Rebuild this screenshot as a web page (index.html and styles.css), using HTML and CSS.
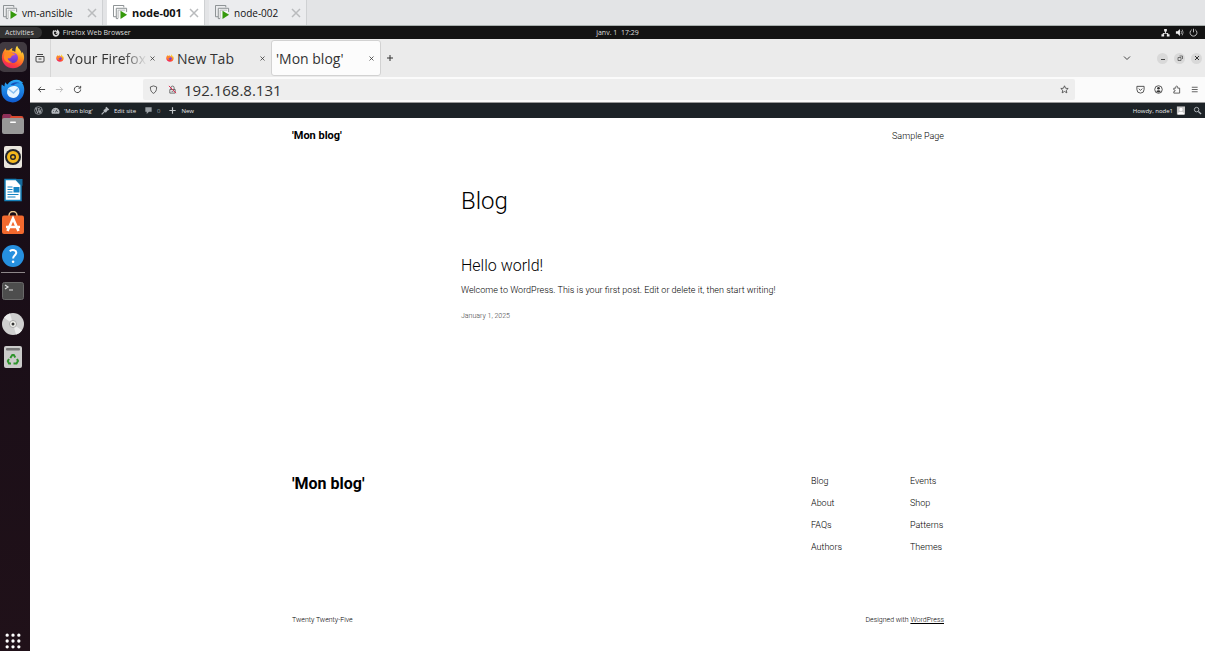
FILE: index.html
```html
<!DOCTYPE html>
<html lang="en">
<head>
<meta charset="utf-8">
<title>'Mon blog'</title>
<link rel="stylesheet" href="styles.css">
</head>
<body>
<svg class="defs" aria-hidden="true">
  <defs>
    <linearGradient id="flame" x1="0.8" y1="0" x2="0.3" y2="1">
      <stop offset="0" stop-color="#fff04a"/><stop offset="0.4" stop-color="#ff9a1f"/><stop offset="0.75" stop-color="#ff4438"/><stop offset="1" stop-color="#e8206a"/>
    </linearGradient>
    <linearGradient id="globe" x1="0" y1="0" x2="0" y2="1">
      <stop offset="0" stop-color="#b04be8"/><stop offset="1" stop-color="#5a38c8"/>
    </linearGradient>
    <linearGradient id="blue" x1="0" y1="0" x2="0" y2="1">
      <stop offset="0" stop-color="#2aa8f4"/><stop offset="1" stop-color="#0f5bd0"/>
    </linearGradient>
    <symbol id="firefox" viewBox="0 0 24 24">
      <path fill="url(#flame)" d="M3.200 5.200c.4-.8 1-1.500 1.400-1.900.1.900.5 1.700 1.100 2.200.8-.2 1.700-.2 2.400.1C9.100 4.300 10.300 3.400 11.600 3.100c-.5.8-.7 1.600-.6 2.300 1.500.2 2.400.8 3.200 1.600C14.700 4.500 14.400 2.400 16.200.8c.5 2.300 2.300 3.300 3.500 5.100.6.900.9 1.700 1 2.500.5-.5.700-1.100.7-1.700 1.200 1.800 1.900 4.200 1.700 6.600C22.700 19.100 17.900 23.300 12 23.300 5.900 23.300.9 18.500.9 12.500c0-2.800.9-5.400 2.300-7.300z"/>
      <circle cx="11.700" cy="12.800" r="5.300" fill="url(#globe)"/>
      <path fill="#ff8a22" d="M3.500 8.500c2.500-2.300 6.200-2 8.300-.3 1.300.2 2.200.7 2.300 1.400-.9 1-2.500.8-3.300 1.500-.7.700-.4 2-2 2.200-1 .2-1.700-.4-2.200.2.500 2 2.500 3.600 5 3.500-3.600 2-8.200-.3-8.800-4.500z"/>
    </symbol>
    <symbol id="cross" viewBox="0 0 10 10"><path d="M1 1l8 8M9 1L1 9" fill="none" stroke="currentColor" stroke-width="1.500"/></symbol>
    <symbol id="vm" viewBox="0 0 16 16">
      <path d="M3.500 12.500h-3V.500h11v2" fill="none" stroke="#858b8d"/><path d="M5.500 14.500h-2v-11h11v4" fill="#f6f7f7" stroke="#858b8d"/><path d="M5.500 14V5.500H13" fill="none" stroke="#b4b8b9"/>
      <path d="M8 6l7 4.500L8 15z" fill="#35990b"/>
    </symbol>
  </defs>
</svg>

<nav class="vm-tabs" aria-label="Virtual machines">
  <div class="vm-tab"><button class="vm-name"><svg><use href="#vm"/></svg>vm-ansible</button><button class="vm-close" aria-label="Close vm-ansible"><svg><use href="#cross"/></svg></button></div>
  <div class="vm-tab vm-tab-active"><button class="vm-name"><svg><use href="#vm"/></svg>node-001</button><button class="vm-close" aria-label="Close node-001"><svg><use href="#cross"/></svg></button></div>
  <div class="vm-tab"><button class="vm-name"><svg><use href="#vm"/></svg>node-002</button><button class="vm-close" aria-label="Close node-002"><svg><use href="#cross"/></svg></button></div>
</nav>

<header class="topbar">
  <div class="topbar-left">
    <button class="activities">Activities</button>
    <button class="app-menu"><svg viewBox="0 0 12 12"><path fill="#d8d8d8" d="M1.200 3l1-1.500.8 1 1.500-.2L5.800 1v1.300l1.400.8L8 .500l2 2 1.200 2c.3 4-2 7-5.200 7S.500 9 .800 5.500z"/><path fill="#151515" d="M3 4l3 .2.800 1L5 6.200l1.700 1.300 1.800-1-.8 2L5 9 3.200 7z"/></svg>Firefox Web Browser</button>
  </div>
  <button class="clock">janv. 1&nbsp; 17:29</button>
  <button class="tray" aria-label="System menu">
    <svg viewBox="0 0 10 10"><path fill="#eee" d="M3.500 1h3v3h-1v1.500H8V7h1.500v2.500h-3V7H7v-.600H3V7h.5v2.500h-3V7H2V5.500h2.500V4h-1z"/></svg>
    <svg viewBox="0 0 10 10"><path fill="#eee" d="M1 3.500h2L5.500 1v8L3 6.500H1z"/><path d="M6.700 3.200q1.300 1.800 0 3.600M8 1.800q2 3.200 0 6.400" fill="none" stroke="#aaa"/></svg>
    <svg viewBox="0 0 10 10"><path d="M3 2a3.800 3.800 0 1 0 4 0M5 .8v4" fill="none" stroke="#ccc"/></svg>
  </button>
</header>

<div class="desktop">
  <nav class="dock" aria-label="Dock">
    <button class="dock-item dock-active" aria-label="Firefox"><svg viewBox="0 0 24 24"><use href="#firefox"/></svg></button>
    <button class="dock-item" aria-label="Thunderbird"><svg viewBox="0 0 24 24"><path fill="url(#blue)" d="M.8 5.500l2.700 2.100C3.400 5.200 4 4 4.800 3.300c.3 1.200.8 1.900 1.700 2.300C8.200 2.500 12 .6 15.800.7c2.300 0 3.700 1 4.600 1.800l1.700 1-1 .4c2.600 3.200 2.800 8.600 1 12.600-1.900 4.200-5.900 6.900-10.400 6.900C5.200 23.400.500 18.400.500 12.300c0-2.700-.3-4.800.3-6.800z"/><path fill="#1450b8" d="M9.500 6c2-3 6.500-3.800 10-1.500-3-.5-5.500.3-6.500 1.500z"/><path fill="#e8f5ff" d="M7 9.500c2.500-2.500 7-3.500 10-1 2.500 2.500 1.500 7.500-1.500 9.500-3.500 2-8.500.5-9.300-3.500-.3-1.800 0-3.500.8-5z"/><path d="M7.500 10l5 4 4.500-4.500" fill="none" stroke="#8abff0" stroke-width="1.500"/></svg></button>
    <button class="dock-item" aria-label="Files"><svg viewBox="0 0 24 24"><path fill="#d94a30" d="M1.500 4a2 2 0 0 1 2-2H9l2 2h9.500a2 2 0 0 1 2 2v6h-21z"/><path fill="#8d2f59" d="M1.500 4a2 2 0 0 1 2-2H9l1 2-2 3H1.500z"/><rect x="1" y="6" width="22" height="16" rx="2" fill="#989898"/><rect x="9" y="9.500" width="6" height="1.500" rx=".7" fill="#fff"/></svg></button>
    <button class="dock-item" aria-label="Rhythmbox"><svg viewBox="0 0 24 24"><rect x="3" y="1" width="18" height="22" rx="2" fill="#e9e5dd"/><circle cx="12" cy="12" r="8" fill="#23242b"/><circle cx="12" cy="12" r="4.500" fill="none" stroke="#f5b91d" stroke-width="3"/><circle cx="12" cy="12" r="1.600" fill="#f5b91d"/></svg></button>
    <button class="dock-item" aria-label="LibreOffice Writer"><svg viewBox="0 0 24 24"><path fill="#fff" stroke="#1680b8" stroke-width="1.500" d="M4 1.500h11L20 7v15.500H4z"/><path fill="#176a9c" d="M14.500 1h7v7z"/><path d="M6.500 9h5M6.500 11.500h5M6.500 14h5M6.500 16.500h11M6.500 19h8" stroke="#1484c4" stroke-width="1.200"/><rect x="12.500" y="9" width="6" height="5.500" fill="#1484c4"/></svg></button>
    <button class="dock-item" aria-label="Ubuntu Software"><svg viewBox="0 0 24 24"><path d="M8 6V4.500a4 4 0 0 1 8 0V6" fill="none" stroke="#e9c58e" stroke-width="1.500"/><rect x="1" y="4.500" width="22" height="18.500" rx="2" fill="#f3692e"/><path d="M6.500 20L12 7.500 17.500 20M5 16h14" fill="none" stroke="#fff" stroke-width="2.600"/></svg></button>
    <button class="dock-item" aria-label="Help"><svg viewBox="0 0 24 24"><circle cx="12" cy="12" r="11" fill="#2690df"/><path d="M8.700 7.200c3-2.200 7-.8 6.500 2-.3 2-3.100 2.300-3.100 5.300" fill="none" stroke="#fff" stroke-width="2"/><circle cx="12.100" cy="17.800" r="1.300" fill="#fff"/></svg></button>
    <hr class="dock-rule">
    <button class="dock-item" aria-label="Terminal"><svg viewBox="0 0 24 24"><rect x="1.500" y="3.500" width="21" height="17" rx="2" fill="#4d4d4d" stroke="#6a6a6a"/><path d="M4 6l3 2-3 2M8 11h4" fill="none" stroke="#ddd" stroke-width="1.200"/></svg></button>
    <button class="dock-item" aria-label="Disc"><svg viewBox="0 0 24 24"><circle cx="12" cy="12" r="11" fill="#cfcfcf"/><path fill="#ececec" d="M12 12L3 5.600A11 11 0 0 1 9 1.400zM12 12l9 6.400a11 11 0 0 1-6 4.200z"/><circle cx="12" cy="12" r="3.500" fill="#f5f5f0" stroke="#aaa"/><circle cx="12" cy="12" r="1.500" fill="#333"/></svg></button>
    <button class="dock-item" aria-label="Trash"><svg viewBox="0 0 24 24"><rect x="3" y="1" width="18" height="22" rx="2" fill="#cbcbca"/><rect x="5" y="3" width="14" height="2.500" rx="1" fill="#777"/><path d="M9.300 13l2-3h1.500l1.500 2.500M16 14l1 2-1.500 2.500h-3M10 18.500H8L6.800 16 8 14" fill="none" stroke="#2f942c" stroke-width="2"/></svg></button>
    <button class="dock-item dock-apps" aria-label="Show Applications"><svg viewBox="0 0 24 24"><path d="M5 5h0M12 5h0M19 5h0M5 12h0M12 12h0M19 12h0M5 19h0M12 19h0M19 19h0" stroke="#fff" stroke-width="4" stroke-linecap="round"/></svg></button>
  </nav>

  <div class="browser">
    <div class="tabstrip">
      <button class="recent" aria-label="Recent browsing"><svg viewBox="0 0 10 10"><path d="M2 1.500h6M1 3.500h8v4.500q0 1-1 1H2q-1 0-1-1zM3.500 6h3" fill="none" stroke="#444"/></svg></button>
      <div class="tab"><button class="tab-name"><svg><use href="#firefox"/></svg><span class="tab-fade">Your Firefox</span></button><button class="tab-close" aria-label="Close tab"><svg><use href="#cross"/></svg></button></div>
      <div class="tab"><button class="tab-name"><svg><use href="#firefox"/></svg><span>New Tab</span></button><button class="tab-close" aria-label="Close tab"><svg><use href="#cross"/></svg></button></div>
      <div class="tab tab-current"><button class="tab-name"><span>'Mon blog'</span></button><button class="tab-close" aria-label="Close tab"><svg><use href="#cross"/></svg></button></div>
      <button class="new-tab" aria-label="New tab"><svg viewBox="0 0 8 8"><path d="M4 1v6M1 4h6" stroke="#333"/></svg></button>
      <div class="window-controls">
        <button class="all-tabs" aria-label="List all tabs"><svg viewBox="0 0 8 8"><path d="M1 2.500l3 3 3-3" fill="none" stroke="#444"/></svg></button>
        <button class="round" aria-label="Minimize"><svg viewBox="0 0 8 8"><path d="M2 5.500h4" stroke="#444"/></svg></button>
        <button class="round" aria-label="Restore"><svg viewBox="0 0 8 8"><path d="M2 3.500h3v3H2zM3.500 2h3v3" fill="none" stroke="#555" stroke-width=".8"/></svg></button>
        <button class="round" aria-label="Close"><svg viewBox="0 0 8 8"><path d="M2 2l4 4M6 2L2 6" stroke="#333"/></svg></button>
      </div>
    </div>

    <div class="toolbar">
      <div class="tool-group">
        <button aria-label="Back"><svg viewBox="0 0 10 10"><path d="M9 5H1.500M4.500 2l-3 3 3 3" fill="none" stroke="#333"/></svg></button>
        <button aria-label="Forward" disabled><svg viewBox="0 0 10 10"><path d="M1 5h7.500M5.500 2l3 3-3 3" fill="none" stroke="#b5b5b5"/></svg></button>
        <button aria-label="Reload"><svg viewBox="0 0 10 10"><path d="M8.500 5A3.500 3.500 0 1 1 7.500 2.500M8.500 1v2.500H6" fill="none" stroke="#333"/></svg></button>
      </div>
      <div class="urlbar">
        <svg viewBox="0 0 10 10"><path d="M5 1l3.500 1.200C8.500 6 7.500 8 5 9.300 2.500 8 1.500 6 1.500 2.200z" fill="none" stroke="#444" stroke-width=".9"/></svg>
        <svg viewBox="0 0 10 10"><path d="M2 5h6v4H2zM3.200 5V3a1.800 1.800 0 0 1 3.600 0v2M4 7h2" fill="none" stroke="#555" stroke-width=".9"/><path d="M1 1l8 8" stroke="#e22850" stroke-width="1.100"/></svg>
        <input type="text" value="192.168.8.131" aria-label="Address">
        <button aria-label="Bookmark"><svg viewBox="0 0 10 10"><path d="M5 .900l1.200 2.700 2.900.300L7 5.800l.6 2.900L5 7.200 2.400 8.700 3 5.800.900 3.900l2.900-.3z" fill="none" stroke="#444" stroke-width=".9"/></svg></button>
      </div>
      <div class="tool-group tool-right">
        <button aria-label="Pocket"><svg viewBox="0 0 10 10"><path d="M1 1.500h8V5a4 4 0 0 1-8 0zM3 4l2 2 2-2" fill="none" stroke="#444"/></svg></button>
        <button aria-label="Account"><svg viewBox="0 0 10 10"><circle cx="5" cy="5" r="4.200" fill="none" stroke="#333" stroke-width=".9"/><circle cx="5" cy="3.600" r="1.500" fill="#333"/><path d="M2.300 7q2.700-2.500 5.400 0-2.700 2.500-5.400 0" fill="#333"/></svg></button>
        <button aria-label="Extensions"><svg viewBox="0 0 10 10"><path d="M2 9h6.500V3.500H6.300C6.800.300 3.700.300 4.200 3.500H2V5.300c2 0 2 2 0 2z" fill="none" stroke="#444" stroke-width=".9"/></svg></button>
        <button aria-label="Menu"><svg viewBox="0 0 10 10"><path d="M2 2.500h6.500M2 5h6.500M2 7.500h6.500" stroke="#555"/></svg></button>
      </div>
    </div>

    <nav class="adminbar" aria-label="Toolbar">
      <a href="#" aria-label="About WordPress"><svg class="wp" viewBox="0 0 10 10"><circle cx="5" cy="5" r="4.300" fill="none" stroke="#aab0b5" stroke-width=".8"/><path d="M1.800 3h2M4.500 3h2M2.300 3l1.700 5 1.200-3.300M5.100 3l1.600 5L8 3.500" fill="none" stroke="#b8bdc2" stroke-width=".9"/></svg></a>
      <a href="#"><svg viewBox="0 0 10 10"><path fill="#b5babf" d="M1 8.500a4.500 4.500 0 1 1 8 0z"/><path d="M5 7l1.500-3M2.500 6h.8M3.300 3.800l.5.500M7 6.200h.8" stroke="#1d2327" stroke-width=".9"/></svg>'Mon blog'</a>
      <a href="#"><svg viewBox="0 0 10 10"><path d="M.700 9.300l3.600-3.600" stroke="#b5babf" stroke-width="1.300"/><path fill="#b5babf" d="M6 .800l3.200 3.200-1 .8-1 .2-1.800 2.500L2.500 4.600 5 3l.1-1.200z"/></svg>Edit site</a>
      <a href="#" class="muted"><svg viewBox="0 0 10 10"><path fill="#9aa0a5" d="M1.500 1.500h7v5H5.500L3 9V6.500H1.500z"/></svg>0</a>
      <a href="#"><svg viewBox="0 0 10 10"><path d="M5 1.500v7M1.500 5h7" stroke="#c3c7ca" stroke-width="1.300"/></svg>New</a>
      <a href="#" class="howdy">Howdy, node1<svg viewBox="0 0 10 10"><path fill="#c8c8c8" d="M1 .500h9v9H1z"/><circle cx="5.500" cy="3.800" r="1.800" fill="#fff"/><path fill="#fff" d="M2 9.500q0-3 3.500-3T9 9.500z"/></svg></a>
      <a href="#" aria-label="Search"><svg viewBox="0 0 10 10"><circle cx="4" cy="4" r="2.500" fill="none" stroke="#b5babf"/><path d="M6 6l3 3" stroke="#b5babf" stroke-width="1.500"/></svg></a>
    </nav>

    <div class="site">
      <header class="site-header"><a href="#" class="site-name">'Mon blog'</a><a href="#">Sample Page</a></header>
      <main class="posts">
        <h1>Blog</h1>
        <article>
          <h2><a href="#">Hello world!</a></h2>
          <p>Welcome to WordPress. This is your first post. Edit or delete it, then start writing!</p>
          <a href="#" class="date"><time datetime="2025-01-01">January 1, 2025</time></a>
        </article>
      </main>
      <footer class="site-footer">
        <div class="footer-main">
          <h2><a href="#">'Mon blog'</a></h2>
          <ul><li><a href="#">Blog</a></li><li><a href="#">About</a></li><li><a href="#">FAQs</a></li><li><a href="#">Authors</a></li></ul>
          <ul><li><a href="#">Events</a></li><li><a href="#">Shop</a></li><li><a href="#">Patterns</a></li><li><a href="#">Themes</a></li></ul>
        </div>
        <div class="credits"><span>Twenty Twenty-Five</span><span>Designed with <a href="#">WordPress</a></span></div>
      </footer>
    </div>
  </div>
</div>
</body>
</html>
```

FILE: styles.css
```css
* { box-sizing: border-box; }
body { margin: 0; min-height: 100vh; padding-bottom: 17px; display: flex; flex-direction: column; background: #fff; font-family: "Open Sans", "Noto Sans", sans-serif; font-size: 7px; color: #111; }
button { border: 0; padding: 0; background: none; font: inherit; color: inherit; display: flex; align-items: center; justify-content: center; flex: none; }
a { color: inherit; text-decoration: none; }
h1, h2, p, ul { margin: 0; padding: 0; font-weight: 300; }
ul { list-style: none; }
svg { display: block; flex: none; width: 10px; height: 10px; }
.defs { position: absolute; width: 0; height: 0; }

/* Virtual machine tabs */
.vm-tabs { display: flex; gap: 4px; height: 26px; background: #e3e4e6; border-bottom: 1px solid #a9b0ae; font-size: 10px; }
.vm-tab { display: flex; align-items: center; justify-content: space-between; width: 98px; padding: 0 5px 0 6px; background: #ebecee; border-right: 1px solid #cfd1d3; }
.vm-tab:first-child { width: 103px; padding-left: 3px; }
.vm-tab-active { background: #fff; font-size: 11px; font-weight: 700; }
.vm-name { gap: 4px; }
.vm-name svg { width: 15px; height: 15px; }
.vm-close { color: #b9bbbd; }

/* Desktop top bar */
.topbar { display: grid; grid-template-columns: 30px 1fr auto 1fr; align-items: center; height: 13px; background: #131313; color: #dedede; }
.topbar-left { display: flex; grid-column: span 2; gap: 10px; }
.activities { height: 11px; padding: 0 8px 0 5px; background: #333; border-radius: 0 6px 6px 0; }
.app-menu { gap: 3px; }
.app-menu svg { width: 8px; height: 8px; }
.tray { justify-self: end; gap: 5px; padding-right: 7px; }
.tray svg { width: 9px; height: 9px; }

.desktop { display: flex; flex: 1; }

/* Dock */
.dock { display: flex; flex-direction: column; align-items: center; gap: 5px; width: 30px; padding: 3px 4px 0 0; background: linear-gradient(#150c16, #201119); }
.dock-item { width: 28px; height: 28px; }
.dock-item svg { width: 24px; height: 24px; }
.dock-active { height: 30px; background: #413a41; border-radius: 5px; }
.dock-rule { width: 24px; height: 1px; margin: -3px 0 -1px; border: 0; background: #8d8689; }
.dock-apps { margin-top: auto; height: 21px; }
.dock-apps svg { width: 20px; height: 20px; }

/* Browser chrome */
.browser { display: flex; flex-direction: column; flex: 1; min-width: 0; }
.tabstrip { display: flex; align-items: center; height: 38px; background: #ebebeb; }
.recent { width: 21px; height: 38px; border-right: 1px solid #d6d6d6; }
.tab { display: flex; align-items: center; justify-content: space-between; width: 110px; height: 36px; padding: 0 6px 0 5px; font-size: 14px; color: #333; }
.tab-current { margin-right: 1px; padding-left: 4px; border: 1px solid #d2d2d2; border-radius: 3px; background: #fcfcfc; }
.tab-name { gap: 3px; min-width: 0; flex: 1; justify-content: flex-start; overflow: hidden; white-space: nowrap; }
.tab-name svg { width: 8px; height: 8px; }
.tab-fade { -webkit-mask-image: linear-gradient(90deg, #000 70%, transparent 102%); mask-image: linear-gradient(90deg, #000 70%, transparent 102%); }
.tab-close svg { width: 5px; height: 5px; }
.new-tab { width: 16px; height: 24px; }
.new-tab svg, .all-tabs svg { width: 8px; height: 8px; }
.window-controls { display: flex; align-items: center; gap: 6px; margin-left: auto; padding-right: 3px; }
.all-tabs { margin-right: 20px; }
.round { width: 11px; height: 11px; border-radius: 50%; background: #d9d9d9; }
.round svg { width: 8px; height: 8px; }
.toolbar { display: flex; align-items: center; height: 26px; padding: 1px 6px 1px 7px; background: #fbfbfb; border-bottom: 1px solid #999; }
.tool-group { display: flex; gap: 9px; }
.tool-right { margin-left: 61px; }
.tool-group svg { width: 9px; height: 9px; }
.urlbar { display: flex; align-items: center; gap: 10px; flex: 1; min-width: 0; height: 21px; margin-left: 61px; padding: 0 6px; background: #eee; border-radius: 2px; }
.urlbar svg { width: 9px; height: 9px; }
.urlbar input { flex: 1; min-width: 0; margin-left: -3px; padding: 0; border: 0; background: none; font: inherit; font-size: 15px; line-height: 20px; color: #333; outline: 0; }

/* WordPress admin bar */
.adminbar { display: flex; align-items: center; gap: 8px; height: 15px; padding: 0 3px 0 4px; background: #1d2327; color: #e9ebed; font-size: 6px; font-weight: 500; }
.adminbar a { display: flex; align-items: center; gap: 4px; }
.adminbar svg { width: 9px; height: 9px; }
.adminbar .muted { color: #9aa0a5; }
.adminbar .howdy { margin-left: auto; gap: 3px; }

/* Site */
.site { display: flex; flex-direction: column; flex: 1; width: 653px; max-width: 100%; margin: 0 auto; padding-left: 1px; font-family: Roboto, "Liberation Sans", sans-serif; font-size: 9px; line-height: 14px; font-weight: 300; color: #000; }
.site-header { display: flex; align-items: center; justify-content: space-between; height: 35px; }
.site-name { font-size: 11px; font-weight: 700; }
.posts { width: 314px; max-width: 100%; margin: 0 auto; padding-top: 33px; }
.posts h1 { font-size: 24px; line-height: 30px; margin-bottom: 40px; }
.posts h2 { font-size: 16px; line-height: 20px; margin-bottom: 7px; }
.posts p { margin-bottom: 11px; white-space: nowrap; }
.date { font-size: 7px; color: #444; }
.site-footer { margin-top: auto; padding-bottom: 24px; }
.footer-main { display: flex; align-items: flex-start; margin-bottom: 59px; }
.footer-main h2 { flex: 1; font-size: 16px; line-height: 20px; font-weight: 700; }
.footer-main ul { display: grid; gap: 8px; width: 99px; }
.footer-main ul:last-child { width: 34px; }
.credits { display: flex; justify-content: space-between; font-size: 7px; }
.credits a { text-decoration: underline; }
```
